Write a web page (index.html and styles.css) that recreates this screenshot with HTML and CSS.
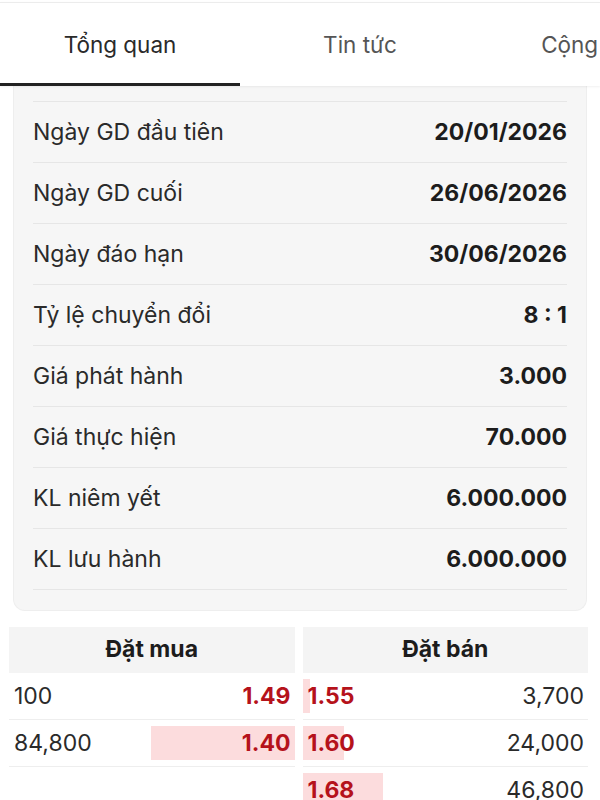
FILE: index.html
```html
<!DOCTYPE html>
<html lang="vi">
<head>
    <meta charset="UTF-8">
    <meta name="viewport" content="width=device-width, initial-scale=1.0">
    <title>Chứng quyền - Tổng quan</title>
    <link rel="stylesheet" href="styles.css">
</head>
<body>
    <div class="tabs">
        <div class="tab active">Tổng quan</div>
        <div class="tab">Tin tức</div>
        <div class="tab">Cộng đồng</div>
    </div>

    <div class="info-card">
        <div class="info-row"><span class="label">Ngày GD đầu tiên</span><span class="value">20/01/2026</span></div>
        <div class="info-row"><span class="label">Ngày GD cuối</span><span class="value">26/06/2026</span></div>
        <div class="info-row"><span class="label">Ngày đáo hạn</span><span class="value">30/06/2026</span></div>
        <div class="info-row"><span class="label">Tỷ lệ chuyển đổi</span><span class="value">8 : 1</span></div>
        <div class="info-row"><span class="label">Giá phát hành</span><span class="value">3.000</span></div>
        <div class="info-row"><span class="label">Giá thực hiện</span><span class="value">70.000</span></div>
        <div class="info-row"><span class="label">KL niêm yết</span><span class="value">6.000.000</span></div>
        <div class="info-row"><span class="label">KL lưu hành</span><span class="value">6.000.000</span></div>
    </div>

    <div class="orderbook">
        <div class="side buy">
            <div class="side-head">Đặt mua</div>
            <div class="ob-row"><span class="bar" style="width: 0px"></span><span class="vol">100</span><span class="price">1.49</span></div>
            <div class="ob-row"><span class="bar" style="width: 144px"></span><span class="vol">84,800</span><span class="price">1.40</span></div>
            <div class="ob-row empty"></div>
        </div>
        <div class="side sell">
            <div class="side-head">Đặt bán</div>
            <div class="ob-row"><span class="bar" style="width: 7px"></span><span class="price">1.55</span><span class="vol">3,700</span></div>
            <div class="ob-row"><span class="bar" style="width: 41px"></span><span class="price">1.60</span><span class="vol">24,000</span></div>
            <div class="ob-row"><span class="bar" style="width: 80px"></span><span class="price">1.68</span><span class="vol">46,800</span></div>
        </div>
    </div>
</body>
</html>
```

FILE: styles.css
```css
body {
    margin: 0;
    padding-top: 2px;
    font-family: Inter, "Liberation Sans", sans-serif;
    font-size: 23px;
    color: #2a2a2a;
    background-color: #fff;
    overflow: hidden;
}

/* tab bar */
.tabs {
    display: flex;
    overflow: hidden;
    border-top: 1px solid #ececec;
    background-color: #fff;
    box-shadow: 0 1px 2px rgba(0,0,0,0.06);
    position: relative;
    z-index: 1;
}

.tab {
    flex: 0 0 240px;
    height: 76px;
    padding-top: 4px;
    line-height: 76px;
    text-align: center;
    font-size: 22.5px;
    color: #555;
    border-bottom: 3px solid transparent;
}

.tab.active {
    color: #2a2a2a;
    border-bottom-color: #222;
}

/* info card */
.info-card {
    margin: 0 13px;
    padding: 15px 19px 20px;
    background-color: #f6f6f6;
    border: 1px solid #eeeeee;
    border-top: none;
    border-radius: 0 0 12px 12px;
}

.info-row {
    display: flex;
    justify-content: space-between;
    align-items: center;
    height: 60px;
    border-top: 1px solid #e6e6e6;
}

.info-row:last-child {
    border-bottom: 1px solid #e6e6e6;
}

.value {
    font-weight: bold;
    color: #1c1c1c;
}

/* order book */
.orderbook {
    display: grid;
    grid-template-columns: 1fr 1fr;
    gap: 8px;
    margin: 16px 12px 0 9px;
}

.side-head {
    height: 46px;
    line-height: 44px;
    text-align: center;
    font-weight: bold;
    background-color: #f4f4f4;
    color: #1c1c1c;
}

.ob-row {
    position: relative;
    display: flex;
    justify-content: space-between;
    align-items: center;
    height: 46px;
    padding: 0 4px 0 5px;
    border-bottom: 1px solid #eeeeee;
}

.ob-row.empty {
    border-bottom: none;
}

.ob-row span {
    position: relative;
}

.ob-row .bar {
    position: absolute;
    top: 6px;
    bottom: 6px;
    background-color: #fcdcdd;
}

.buy .bar {
    right: 0;
}

.sell .bar {
    left: 0;
}

.price {
    color: #b5121b;
    font-weight: bold;
}

.vol {
    color: #2a2a2a;
}
```
